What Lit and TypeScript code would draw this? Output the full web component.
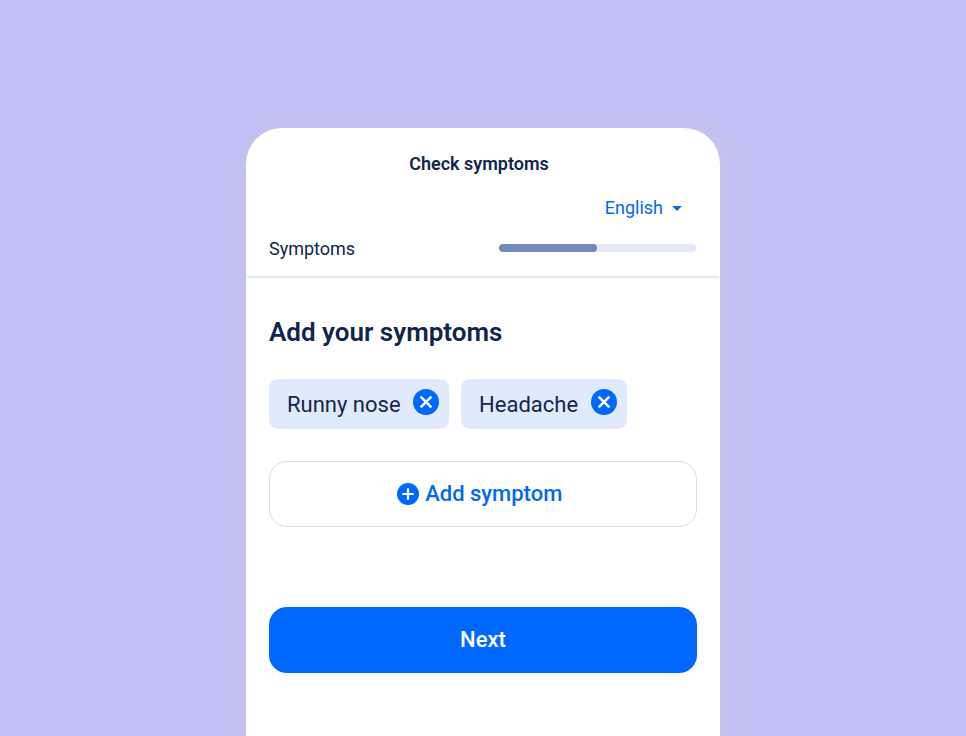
import { LitElement, html, css } from "lit";
import { customElement, property, state } from "lit/decorators.js";

@customElement("symptom-chip")
class SymptomChip extends LitElement {
  @property() label = "";

  static styles = css`
    :host { display: block; }
    .chip {
      box-sizing: border-box;
      height: 50px;
      display: flex;
      align-items: center;
      gap: 12.5px;
      padding: 1px 10px 0 18px;
      border-radius: 9px;
      background: #dfebfd;
      color: #14264b;
      font-size: 22px;
      line-height: 26px;
      white-space: nowrap;
    }
    .remove {
      display: block;
      width: 26px;
      height: 26px;
      margin-bottom: 5.6px;
      padding: 0;
      border: 0;
      background: none;
    }
    svg { display: block; }
  `;

  render() {
    return html`
      <div class="chip">
        <span>${this.label}</span>
        <button class="remove" aria-label="Remove">
          <svg width="26" height="26" viewBox="0 0 26 26">
            <circle cx="13" cy="13" r="13" fill="#0068ff" />
            <path d="M7.6 7.6 18.4 18.4M18.4 7.6 7.6 18.4" stroke="#fff" stroke-width="2.5" />
          </svg>
        </button>
      </div>
    `;
  }
}

@customElement("app-root")
class AppRoot extends LitElement {
  @state() private symptoms = ["Runny nose", "Headache"];
  @state() private progress = 50;

  static styles = css`
    :host {
      display: flex;
      justify-content: center;
      box-sizing: border-box;
      height: 736px;
      padding-top: 128px;
      overflow: hidden;
      background: #c1c1f5;
      font-family: Roboto, sans-serif;
      color: #10264c;
    }
    .card {
      width: 474px;
      height: 900px;
      border-radius: 36px 36px 0 0;
      background: #fff;
      box-shadow: 6px 2px 22px rgba(215, 195, 220, 0.5);
    }
    header {
      box-sizing: border-box;
      height: 150px;
      margin: 0 1px;
      padding: 25px 22px 0;
      border-bottom: 2px solid #e4e9eb;
    }
    .title {
      margin: 0 8px 0 0;
      font-size: 18px;
      font-weight: 560;
      line-height: 22px;
      text-align: center;
    }
    .language {
      display: flex;
      align-items: center;
      justify-content: flex-end;
      gap: 9px;
      margin: 22px 15px 0 0;
      font-size: 18px;
      line-height: 22px;
      color: #006af0;
    }
    .step {
      display: flex;
      justify-content: space-between;
      margin-top: 19px;
      font-size: 18px;
      line-height: 22px;
    }
    .track {
      width: 197.5px;
      height: 8px;
      margin-top: 6px;
      margin-right: 1px;
      border-radius: 4px;
      background: #e4e9f3;
    }
    .fill {
      height: 8px;
      border-radius: 4px;
      background: #7189b3;
    }
    main { padding: 38px 23px 0; }
    h2 {
      margin: 0;
      font-size: 26px;
      font-weight: 560;
      line-height: 32px;
    }
    .chips {
      display: flex;
      gap: 12px;
      margin-top: 31.4px;
      margin-bottom: -0.4px;
    }
    .action {
      box-sizing: border-box;
      display: flex;
      align-items: center;
      justify-content: center;
      width: 428px;
      height: 66px;
      padding: 0;
      border-radius: 18px;
      font: 550 22px/26px Roboto, sans-serif;
    }
    .add {
      gap: 6px;
      margin-top: 32px;
      padding-right: 6.5px;
      border: 1px solid #d8dddf;
      background: #fff;
      color: #006af0;
    }
    .next {
      margin-top: 80px;
      border: 0;
      background: #0068ff;
      color: #fff;
    }
    svg { display: block; }
  `;

  render() {
    return html`
      <div class="card">
        <header>
          <h1 class="title">Check symptoms</h1>
          <div class="language">
            <span>English</span>
            <svg width="10" height="5" viewBox="0 0 10 5"><path d="M0 0H10L5 5Z" fill="#0068f5" /></svg>
          </div>
          <div class="step">
            <span>Symptoms</span>
            <div class="track"><div class="fill" style="width:${this.progress}%"></div></div>
          </div>
        </header>
        <main>
          <h2>Add your symptoms</h2>
          <div class="chips">
            ${this.symptoms.map((s) => html`<symptom-chip .label=${s}></symptom-chip>`)}
          </div>
          <button class="action add">
            <svg width="22" height="22" viewBox="0 0 22 22">
              <circle cx="11" cy="11" r="11" fill="#0068ff" />
              <path d="M11 5.3V16.7M5.3 11H16.7" stroke="#fff" stroke-width="2.2" />
            </svg>
            <span>Add symptom</span>
          </button>
          <button class="action next">Next</button>
        </main>
      </div>
    `;
  }
}
